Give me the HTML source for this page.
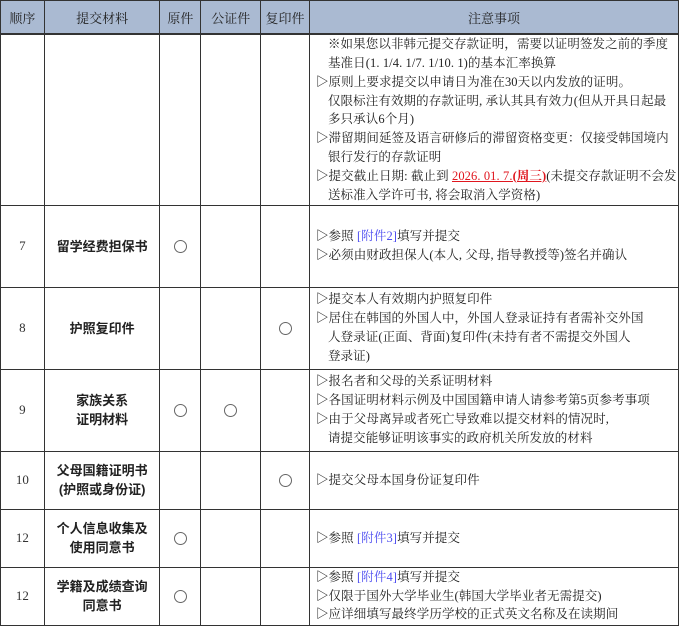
<!DOCTYPE html>
<html><head><meta charset="utf-8"><style>
html,body{margin:0;padding:0;background:#fff;width:679px;height:626px;overflow:hidden}
table{border-collapse:collapse;table-layout:fixed;position:absolute;left:0;top:0;font-family:"Liberation Serif","Noto Serif CJK SC",serif;font-size:12.5px;color:#222}
td,th{border:1px solid #333;padding:0;vertical-align:middle;text-align:center;overflow:hidden}
th{background:#aabad2;font-weight:normal;height:32px;border-bottom:2px solid #333;font-size:13px}
td.n{color:#333;font-size:13px}
td.m{font-weight:bold;line-height:19px;font-family:"Liberation Sans","Noto Sans CJK SC",sans-serif;font-size:13px}
td.t{text-align:left;padding-left:6px;line-height:18.8px;white-space:nowrap;letter-spacing:0.1px}
.o{display:inline-block;width:11px;height:11px;border:1px solid #666;border-radius:50%;vertical-align:middle}
.i{padding-left:12px}
.r{color:#e0161e;text-decoration:underline}
.rb{color:#e0161e;font-weight:bold;text-decoration:underline}
.b{color:#4d4df0}
</style></head><body>
<table>
<colgroup><col style="width:44px"><col style="width:116px"><col style="width:41px"><col style="width:60px"><col style="width:49px"><col style="width:369px"></colgroup>
<tr><th>顺序</th><th>提交材料</th><th>原件</th><th>公证件</th><th>复印件</th><th>注意事项</th></tr>
<tr style="height:171px"><td></td><td></td><td></td><td></td><td></td><td class="t">
<div class="i">※如果您以非韩元提交存款证明，需要以证明签发之前的季度</div>
<div class="i">基准日(1. 1/4. 1/7. 1/10. 1)的基本汇率换算</div>
<div>▷原则上要求提交以申请日为准在30天以内发放的证明。</div>
<div class="i">仅限标注有效期的存款证明, 承认其具有效力(但从开具日起最</div>
<div class="i">多只承认6个月)</div>
<div>▷滞留期间延签及语言研修后的滞留资格变更：仅接受韩国境内</div>
<div class="i">银行发行的存款证明</div>
<div>▷提交截止日期: 截止到 <span class="r">2026. 01. 7.</span><span class="rb">(周三)</span>(未提交存款证明不会发</div>
<div class="i">送标准入学许可书, 将会取消入学资格)</div>
</td></tr>
<tr style="height:82px"><td class="n">7</td><td class="m">留学经费担保书</td><td><span class="o"></span></td><td></td><td></td><td class="t">
<div>▷参照 <span class="b">[附件2]</span>填写并提交</div>
<div>▷必须由财政担保人(本人, 父母, 指导教授等)签名并确认</div></td></tr>
<tr style="height:82px"><td class="n">8</td><td class="m">护照复印件</td><td></td><td></td><td><span class="o"></span></td><td class="t">
<div>▷提交本人有效期内护照复印件</div>
<div>▷居住在韩国的外国人中，外国人登录证持有者需补交外国</div>
<div class="i">人登录证(正面、背面)复印件(未持有者不需提交外国人</div>
<div class="i">登录证)</div></td></tr>
<tr style="height:82px"><td class="n">9</td><td class="m">家族关系<br>证明材料</td><td><span class="o"></span></td><td><span class="o"></span></td><td></td><td class="t">
<div>▷报名者和父母的关系证明材料</div>
<div>▷各国证明材料示例及中国国籍申请人请参考第5页参考事项</div>
<div>▷由于父母离异或者死亡导致难以提交材料的情况时,</div>
<div class="i">请提交能够证明该事实的政府机关所发放的材料</div></td></tr>
<tr style="height:58px"><td class="n">10</td><td class="m">父母国籍证明书<br>(护照或身份证)</td><td></td><td></td><td><span class="o"></span></td><td class="t">
<div>▷提交父母本国身份证复印件</div></td></tr>
<tr style="height:58px"><td class="n">12</td><td class="m">个人信息收集及<br>使用同意书</td><td><span class="o"></span></td><td></td><td></td><td class="t">
<div>▷参照 <span class="b">[附件3]</span>填写并提交</div></td></tr>
<tr style="height:58px"><td class="n">12</td><td class="m">学籍及成绩查询<br>同意书</td><td><span class="o"></span></td><td></td><td></td><td class="t">
<div>▷参照 <span class="b">[附件4]</span>填写并提交</div>
<div>▷仅限于国外大学毕业生(韩国大学毕业者无需提交)</div>
<div>▷应详细填写最终学历学校的正式英文名称及在读期间</div></td></tr>
</table>
</body></html>
